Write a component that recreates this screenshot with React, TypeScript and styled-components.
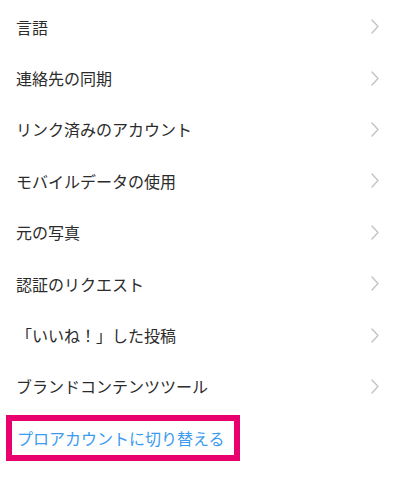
import React from "react";
import styled, { createGlobalStyle } from "styled-components";

const Global = createGlobalStyle`
  html, body { margin: 0; padding: 0; background: #ffffff; }
  body { font-family: "Noto Sans CJK JP", "Noto Sans", sans-serif; }
`;

const List = styled.div`
  width: 400px;
  padding-top: 1px;
  display: flex;
  flex-direction: column;
`;

const Row = styled.div`
  height: 51.4px;
  display: flex;
  align-items: center;
  justify-content: space-between;
  padding: 0 21px 0 16px;
  box-sizing: border-box;
`;

const Label = styled.span`
  font-size: 16px;
  color: #2b2b2b;
  line-height: 1;
  letter-spacing: 0;
`;

const ActionRow = styled.div`
  height: 51.4px;
  display: flex;
  align-items: flex-start;
  padding: 3px 0 0 6px;
  box-sizing: border-box;
`;

const Highlight = styled.div`
  width: 234px;
  height: 46px;
  border: 6px solid #e8006f;
  box-sizing: border-box;
  display: flex;
  align-items: center;
  padding-left: 5px;
  background: #fff;
`;

const ActionLabel = styled.span`
  font-size: 16px;
  color: #3a9bef;
  line-height: 1;
`;

const Chevron = () => (
  <svg width="8" height="15" viewBox="0 0 8 15" fill="none">
    <path d="M1 1 L7 7.5 L1 14" stroke="#c4c4c4" strokeWidth="1.4" strokeLinecap="round" strokeLinejoin="round" />
  </svg>
);

const items = [
  "言語",
  "連絡先の同期",
  "リンク済みのアカウント",
  "モバイルデータの使用",
  "元の写真",
  "認証のリクエスト",
  "「いいね！」した投稿",
  "ブランドコンテンツツール",
];

export default function App() {
  return (
    <>
      <Global />
      <List>
        {items.map((t) => (
          <Row key={t}>
            <Label>{t}</Label>
            <Chevron />
          </Row>
        ))}
        <ActionRow>
          <Highlight>
            <ActionLabel>プロアカウントに切り替える</ActionLabel>
          </Highlight>
        </ActionRow>
      </List>
    </>
  );
}
